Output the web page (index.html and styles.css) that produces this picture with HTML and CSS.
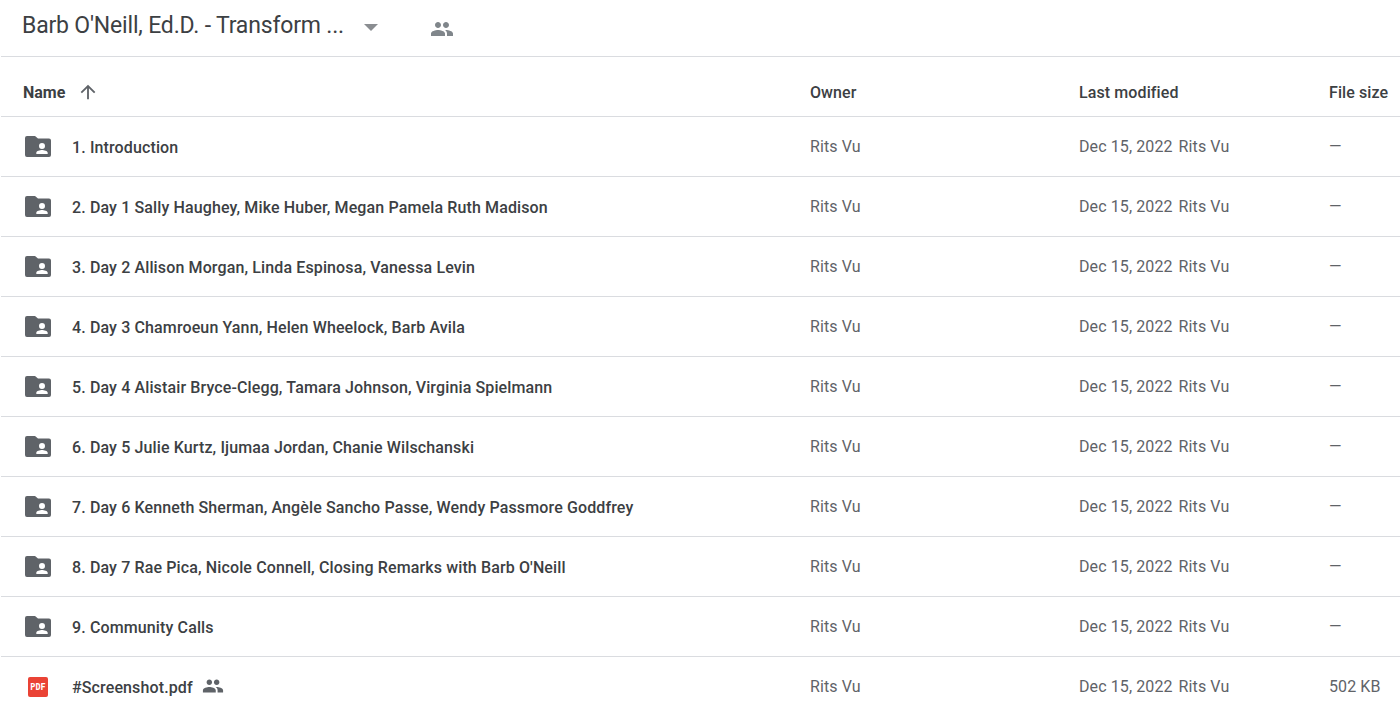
FILE: index.html
```html
<!DOCTYPE html>
<html lang="en">
<head>
<meta charset="utf-8">
<title>Barb O'Neill, Ed.D. - Transform</title>
<link rel="stylesheet" href="styles.css">
</head>
<body>
<svg class="defs" width="0" height="0" aria-hidden="true">
  <symbol id="people" viewBox="0 0 24 24"><path d="M16 11c1.66 0 2.99-1.34 2.99-3S17.66 5 16 5c-1.66 0-3 1.34-3 3s1.34 3 3 3zm-8 0c1.66 0 2.99-1.34 2.99-3S9.66 5 8 5C6.34 5 5 6.34 5 8s1.34 3 3 3zm0 2c-2.33 0-7 1.17-7 3.5V19h14v-2.5c0-2.33-4.67-3.5-7-3.5zm8 0c-.29 0-.62.02-.97.05 1.16.84 1.97 1.97 1.97 3.45V19h6v-2.5c0-2.33-4.67-3.5-7-3.5z"/></symbol>
  <symbol id="folder" viewBox="0 0 26 21"><path fill-rule="evenodd" d="M2 0H10l3 2.500h11A2 2 0 0 1 26 4.500V19a2 2 0 0 1-2 2H2a2 2 0 0 1-2-2V2A2 2 0 0 1 2 0zM17 7a3 3 0 1 0 0 6 3 3 0 0 0 0-6zM11.300 18h11.400v-1.300c0-1.900-3.800-2.800-5.700-2.800s-5.700.9-5.700 2.800z"/></symbol>
</svg>
<header class="topbar">
  <h1 class="title">Barb O'Neill, Ed.D. - Transform ...</h1>
  <span class="caret"></span>
  <svg class="top-people"><use href="#people"/></svg>
</header>
<main class="list">
  <div class="row head">
    <div class="name"><span class="h-name">Name</span><svg class="arrow" viewBox="0 0 24 24"><path d="M4 12l1.410 1.410L11 7.830V20h2V7.830l5.580 5.590L20 12l-8-8-8 8z"/></svg></div>
    <div>Owner</div><div>Last modified</div><div>File size</div>
  </div>
  <div class="row"><div class="name"><svg class="folder"><use href="#folder"/></svg><span class="fname">1. Introduction</span></div><div class="cell">Rits Vu</div><div class="cell"><span class="date">Dec 15, 2022</span>Rits Vu</div><div class="cell">—</div></div>
  <div class="row"><div class="name"><svg class="folder"><use href="#folder"/></svg><span class="fname">2. Day 1 Sally Haughey, Mike Huber, Megan Pamela Ruth Madison</span></div><div class="cell">Rits Vu</div><div class="cell"><span class="date">Dec 15, 2022</span>Rits Vu</div><div class="cell">—</div></div>
  <div class="row"><div class="name"><svg class="folder"><use href="#folder"/></svg><span class="fname">3. Day 2 Allison Morgan, Linda Espinosa, Vanessa Levin</span></div><div class="cell">Rits Vu</div><div class="cell"><span class="date">Dec 15, 2022</span>Rits Vu</div><div class="cell">—</div></div>
  <div class="row"><div class="name"><svg class="folder"><use href="#folder"/></svg><span class="fname">4. Day 3 Chamroeun Yann, Helen Wheelock, Barb Avila</span></div><div class="cell">Rits Vu</div><div class="cell"><span class="date">Dec 15, 2022</span>Rits Vu</div><div class="cell">—</div></div>
  <div class="row"><div class="name"><svg class="folder"><use href="#folder"/></svg><span class="fname">5. Day 4 Alistair Bryce-Clegg, Tamara Johnson, Virginia Spielmann</span></div><div class="cell">Rits Vu</div><div class="cell"><span class="date">Dec 15, 2022</span>Rits Vu</div><div class="cell">—</div></div>
  <div class="row"><div class="name"><svg class="folder"><use href="#folder"/></svg><span class="fname">6. Day 5 Julie Kurtz, Ijumaa Jordan, Chanie Wilschanski</span></div><div class="cell">Rits Vu</div><div class="cell"><span class="date">Dec 15, 2022</span>Rits Vu</div><div class="cell">—</div></div>
  <div class="row"><div class="name"><svg class="folder"><use href="#folder"/></svg><span class="fname">7. Day 6 Kenneth Sherman, Angèle Sancho Passe, Wendy Passmore Goddfrey</span></div><div class="cell">Rits Vu</div><div class="cell"><span class="date">Dec 15, 2022</span>Rits Vu</div><div class="cell">—</div></div>
  <div class="row"><div class="name"><svg class="folder"><use href="#folder"/></svg><span class="fname">8. Day 7 Rae Pica, Nicole Connell, Closing Remarks with Barb O'Neill</span></div><div class="cell">Rits Vu</div><div class="cell"><span class="date">Dec 15, 2022</span>Rits Vu</div><div class="cell">—</div></div>
  <div class="row"><div class="name"><svg class="folder"><use href="#folder"/></svg><span class="fname">9. Community Calls</span></div><div class="cell">Rits Vu</div><div class="cell"><span class="date">Dec 15, 2022</span>Rits Vu</div><div class="cell">—</div></div>
  <div class="row"><div class="name"><span class="pdf">PDF</span><span class="fname">#Screenshot.pdf</span><svg class="shared"><use href="#people"/></svg></div><div class="cell">Rits Vu</div><div class="cell"><span class="date">Dec 15, 2022</span>Rits Vu</div><div class="cell">502 KB</div></div>
</main>
</body>
</html>
```
FILE: styles.css
```css
* { box-sizing: border-box; }
html, body { margin: 0; height: 100%; overflow: hidden; background: #fff; }
body { font-family: Roboto, sans-serif; color: #3c4043; width: 1400px; height: 711px; }
.defs { position: absolute; }
.topbar {
  height: 57px;
  margin-left: 1px;
  border-bottom: 1px solid #dadce0;
  display: flex;
  align-items: center;
  padding-left: 21px;
  padding-bottom: 5px;
}
.title { margin: 0; font-family: Roboto, sans-serif; font-size: 23px; letter-spacing: -.18px; font-weight: 400; color: #3c4043; width: 322px; white-space: nowrap; }
.caret { width: 0; height: 0; margin-left: 20px; margin-top: 3px; border-left: 7px solid transparent; border-right: 7px solid transparent; border-top: 7px solid #8a8d91; }
.top-people { width: 24px; height: 24px; margin-left: 52px; margin-top: 6px; fill: #80868b; }
.row {
  height: 60px;
  margin-left: 1px;
  border-bottom: 1px solid #dadce0;
  display: grid;
  grid-template-columns: 809px 269px 250px 70px;
  align-items: center;
  font-size: 16px;
  letter-spacing: .1px;
  white-space: nowrap;
  color: #5f6368;
}
.head { color: #3c4043; font-weight: 500; padding-top: 11px; }
.name { display: flex; align-items: center; color: #3c4043; font-weight: 500; padding-left: 22px; }
.h-name { width: 43px; font-weight: 700; letter-spacing: 0; }
.arrow { width: 22px; height: 22px; margin-left: 11px; fill: #5f6368; }
.folder { width: 26px; height: 21px; margin-left: 2px; margin-right: 21px; fill: #5f6368; }
.fname { display: block; padding-top: 1px; letter-spacing: .125px; }
.cell { font-weight: 400; }
.date { margin-right: 6px; }
.pdf {
  width: 20px; height: 20px; margin-left: 5px; margin-right: 24px;
  background: #ea4335; color: #fff; border-radius: 2px; letter-spacing: 0;
  font: 700 8.500px/20px "DejaVu Sans Mono", monospace; text-align: center;
}
.shared { width: 22px; height: 22px; margin-left: 9px; margin-top: -2px; fill: #5f6368; }
```
